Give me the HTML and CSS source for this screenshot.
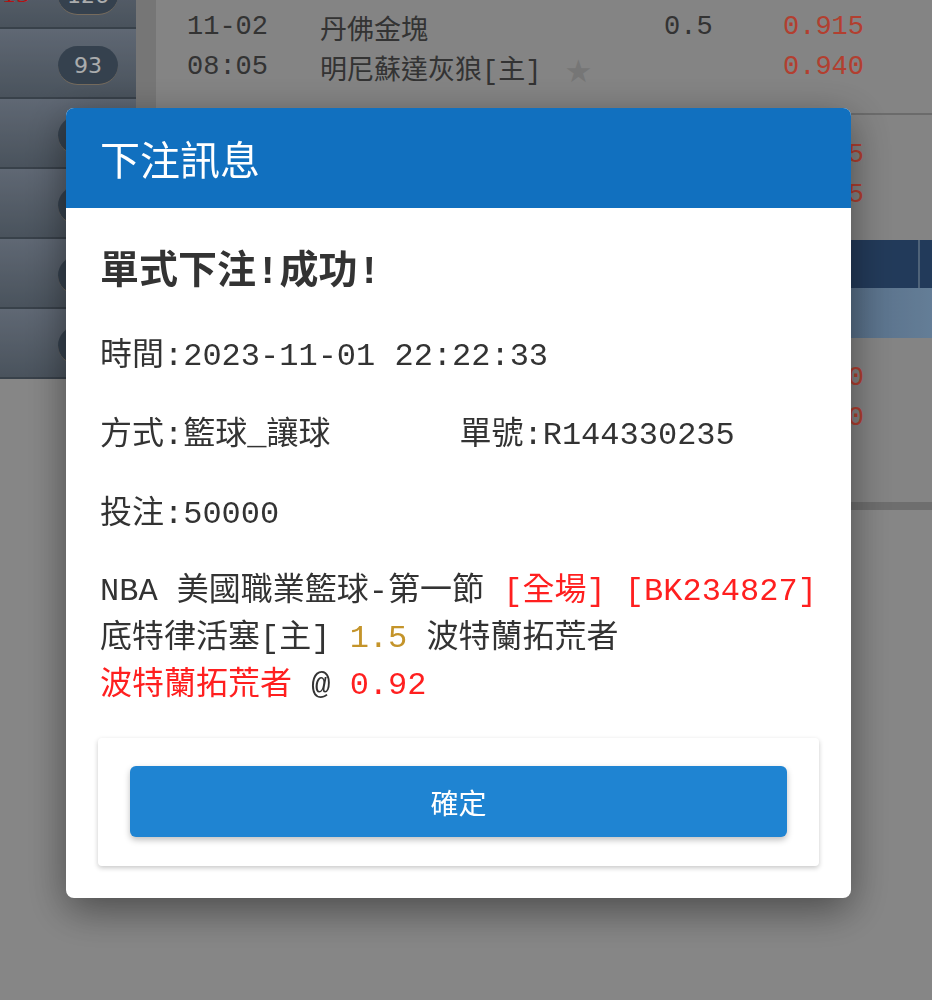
FILE: index.html
```html
<!DOCTYPE html>
<html>
<head>
  <meta charset="UTF-8">
  <title>下注訊息</title>
  <link rel="stylesheet" href="styles.css">
</head>
<body>
  <div class="page">
    <div class="sidebar">
      <div class="menu">
        <div class="menu-item"><span class="count">15</span><span class="badge">126</span></div>
        <div class="menu-item"><span class="badge">93</span></div>
        <div class="menu-item"><span class="badge">41</span></div>
        <div class="menu-item"><span class="badge">28</span></div>
        <div class="menu-item"><span class="badge">17</span></div>
        <div class="menu-item"><span class="badge">6</span></div>
      </div>
    </div>
    <div class="main">
      <div class="match first">
        <div class="row"><span class="date">11-02</span><span class="team">丹佛金塊</span><span class="hdp">0.5</span><span class="odds">0.915</span></div>
        <div class="row"><span class="date">08:05</span><span class="team">明尼蘇達灰狼[主]<span class="star">★</span></span><span class="hdp"></span><span class="odds">0.940</span></div>
      </div>
      <div class="match">
        <div class="row"><span class="date">11-02</span><span class="team">鳳凰城太陽</span><span class="hdp">2.5</span><span class="odds">0.925</span></div>
        <div class="row"><span class="date">09:05</span><span class="team">聖安東尼奧馬刺[主]</span><span class="hdp"></span><span class="odds">0.935</span></div>
      </div>
      <div class="league">
        <div class="league-name">NBA 美國職業籃球-第一節</div>
        <div class="league-more"></div>
      </div>
      <div class="league-sub"></div>
      <div class="match last">
        <div class="row"><span class="date">11-02</span><span class="team">底特律活塞[主]</span><span class="hdp">1.5</span><span class="odds">0.900</span></div>
        <div class="row"><span class="date">08:00</span><span class="team">波特蘭拓荒者</span><span class="hdp"></span><span class="odds">0.920</span></div>
      </div>
    </div>
  </div>

  <div class="mask">
    <div class="dialog">
      <div class="dialog-head">下注訊息</div>
      <div class="dialog-body">
        <h3 class="result-title">單式下注!成功!</h3>
        <div class="info-line">時間:2023-11-01 22:22:33</div>
        <div class="info-line">
          <span class="half">方式:籃球_讓球</span>
          <span class="half">單號:R144330235</span>
        </div>
        <div class="info-line">投注:50000</div>
        <div class="bet-detail">
          <div>NBA 美國職業籃球-第一節 <span class="red">[全場] [BK234827]</span></div>
          <div>底特律活塞[主] <span class="gold">1.5</span> 波特蘭拓荒者</div>
          <div><span class="red">波特蘭拓荒者</span> @ <span class="red">0.92</span></div>
        </div>
        <div class="confirm-card">
          <button class="btn-confirm">確定</button>
        </div>
      </div>
    </div>
  </div>
</body>
</html>
```

FILE: styles.css
```css
body {
  margin: 0;
  background: #c1c1c1;
  font-family: "Liberation Mono", "Noto Sans CJK TC", monospace;
  overflow: hidden;
}
.page {
  display: flex;
  align-items: flex-start;
}

/* left menu */
.sidebar {
  width: 136px;
  flex: none;
  overflow: hidden;
}
.menu {
  margin-top: -41px;
}
.menu-item {
  height: 68px;
  border-bottom: 2px solid #515d6a;
  background: linear-gradient(#8995a6, #6a7785);
  display: flex;
  align-items: center;
  padding-right: 18px;
}
.count {
  align-self: flex-start;
  margin-top: 20px;
  margin-left: 2px;
  font-family: "Liberation Serif", serif;
  font-size: 28px;
  line-height: 28px;
  color: #ff1c1c;
}
.badge {
  margin-left: auto;
  margin-top: 5px;
  width: 60px;
  height: 39px;
  border-radius: 20px;
  background: #4d5e70;
  border-bottom: 1px solid #a99a86;
  box-sizing: border-box;
  color: #f4f6f8;
  font-family: "DejaVu Sans", sans-serif;
  font-size: 22px;
  display: flex;
  align-items: center;
  justify-content: center;
}

/* match list */
.main {
  flex: 1;
  margin-top: -13px;
  border-left: 20px solid #aaaaaa;
}
.match {
  height: 125px;
  box-sizing: border-box;
  padding-top: 20px;
  background: #bdbdbd;
}
.match.first {
  height: 128px;
  border-bottom: 2px solid #9a9a9a;
}
.match.last {
  height: 172px;
  border-bottom: 8px solid #9e9e9e;
}
.row {
  display: flex;
  align-items: center;
  height: 40px;
  padding-left: 31px;
  font-size: 27px;
  color: #494949;
  white-space: nowrap;
}
.date {
  width: 133px;
}
.team {
  width: 344px;
  display: flex;
  align-items: center;
}
.hdp {
  width: 119px;
}
.odds {
  color: #ff5b45;
}
.star {
  margin-left: 23px;
  margin-top: 8px;
  font-family: "DejaVu Sans", sans-serif;
  font-size: 31px;
  line-height: 31px;
  color: #a9a9a9;
}
.league {
  height: 48px;
  display: flex;
  background: #325481;
}
.league-name {
  width: 764px;
  border-right: 2px solid #728eae;
  color: #fff;
  font-size: 26px;
  line-height: 48px;
  padding-left: 20px;
  box-sizing: border-box;
}
.league-sub {
  height: 50px;
  background: linear-gradient(90deg, #6a8ab0 0%, #7ea0c4 90%, #90b4d8 100%);
}

/* dialog */
.mask {
  position: fixed;
  top: 0;
  left: 0;
  right: 0;
  bottom: 0;
  background: rgba(0, 0, 0, 0.3);
}
.dialog {
  position: absolute;
  left: 66px;
  top: 108px;
  width: 785px;
  background: #fff;
  border-radius: 8px;
  overflow: hidden;
  box-shadow: 0 12px 40px rgba(0, 0, 0, 0.45);
}
.dialog-head {
  height: 100px;
  display: flex;
  align-items: center;
  padding-left: 34px;
  background: #1170bf;
  color: #fff;
  font-family: "Noto Sans CJK TC", sans-serif;
  font-size: 40px;
}
.dialog-body {
  padding: 37px 32px 32px;
  color: #333;
}
.result-title {
  margin: 0;
  padding-left: 2px;
  font-size: 39px;
  line-height: 56px;
  font-weight: 700;
}
.info-line {
  display: flex;
  margin-top: 33px;
  padding-left: 2px;
  font-size: 32px;
  line-height: 46px;
  white-space: nowrap;
}
.half {
  flex: 1;
}
.bet-detail {
  margin-top: 30px;
  padding-left: 2px;
  font-size: 32px;
  line-height: 47px;
  white-space: nowrap;
}
.red {
  color: #ff1f1f;
}
.gold {
  color: #c4942a;
}
.confirm-card {
  margin-top: 29px;
  padding: 28px 32px 29px;
  border-radius: 4px;
  background: #fff;
  box-shadow: 0 2px 5px rgba(0, 0, 0, 0.22);
}
.btn-confirm {
  display: block;
  width: 100%;
  height: 71px;
  border: none;
  border-radius: 6px;
  background: #1f84d2;
  color: #fff;
  font-family: "Noto Sans CJK TC", sans-serif;
  font-size: 28px;
  font-weight: 400;
  box-shadow: 0 3px 6px rgba(0, 0, 0, 0.25);
  cursor: pointer;
}
```
